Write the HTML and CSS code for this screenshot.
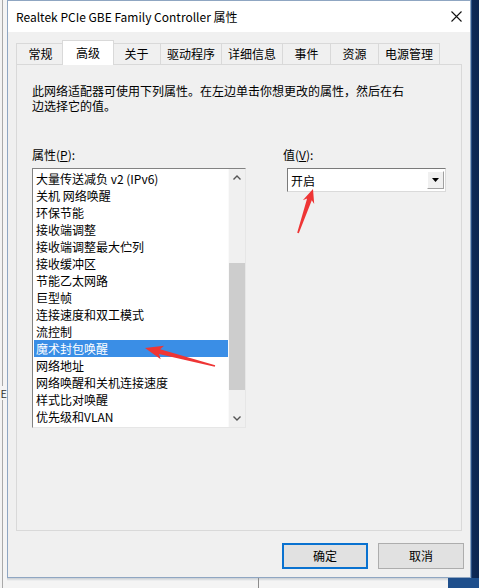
FILE: index.html
```html
<!DOCTYPE html>
<html lang="zh-CN">
<head>
<meta charset="utf-8">
<title>Realtek PCIe GBE Family Controller 属性</title>
<link rel="stylesheet" href="styles.css">
</head>
<body>
<div class="desktop">
  <div class="bg-left"><div class="frag">E</div></div>

  <div class="dialog">
    <div class="titlebar">
      <span class="title">Realtek PCIe GBE Family Controller 属性</span>
      <svg class="close" width="11" height="11" viewBox="0 0 11 11"><path d="M0.5 0.5 L10.5 10.5 M10.5 0.5 L0.5 10.5" stroke="#111" stroke-width="1.1" fill="none"/></svg>
    </div>
    <div class="body">
      <div class="tabs">
        <div class="tab">常规</div>
        <div class="tab active">高级</div>
        <div class="tab">关于</div>
        <div class="tab">驱动程序</div>
        <div class="tab">详细信息</div>
        <div class="tab">事件</div>
        <div class="tab">资源</div>
        <div class="tab">电源管理</div>
      </div>
      <div class="panel">
        <p class="desc">此网络适配器可使用下列属性。在左边单击你想更改的属性，然后在右边选择它的值。</p>
        <div class="cols">
          <div class="col-left">
            <div class="label">属性(<u>P</u>):</div>
            <div class="listbox">
              <ul class="items">
                <li class="item">大量传送减负 v2 (IPv6)</li>
                <li class="item">关机 网络唤醒</li>
                <li class="item">环保节能</li>
                <li class="item">接收端调整</li>
                <li class="item">接收端调整最大伫列</li>
                <li class="item">接收缓冲区</li>
                <li class="item">节能乙太网路</li>
                <li class="item">巨型帧</li>
                <li class="item">连接速度和双工模式</li>
                <li class="item">流控制</li>
                <li class="item selected">魔术封包唤醒</li>
                <li class="item">网络地址</li>
                <li class="item">网络唤醒和关机连接速度</li>
                <li class="item">样式比对唤醒</li>
                <li class="item">优先级和VLAN</li>
              </ul>
              <div class="scrollbar">
                <div class="sb-btn"><svg width="8" height="5" viewBox="0 0 8 5"><path d="M0.5 4.5 L4 1 L7.5 4.5" stroke="#555" stroke-width="1.4" fill="none"/></svg></div>
                <div class="sb-track"><div class="sb-thumb"></div></div>
                <div class="sb-btn"><svg width="8" height="5" viewBox="0 0 8 5"><path d="M0.5 0.5 L4 4 L7.5 0.5" stroke="#555" stroke-width="1.4" fill="none"/></svg></div>
              </div>
            </div>
          </div>
          <div class="col-right">
            <div class="label">值(<u>V</u>):</div>
            <div class="select">
              <span class="select-text">开启</span>
              <span class="select-btn"><svg width="7" height="4" viewBox="0 0 7 4"><path d="M0 0 L7 0 L3.5 4 Z" fill="#000"/></svg></span>
            </div>
          </div>
        </div>
      </div>
      <div class="actions">
        <button class="btn default">确定</button>
        <button class="btn">取消</button>
      </div>
    </div>
  </div>

  <div class="desk-right"></div>
  <div class="bottom"><div class="b-light"><span class="b-edge"></span></div><div class="b-dark"></div></div>

  <svg class="annot" width="479" height="588" viewBox="0 0 479 588">
    <polygon fill="#ee3535" points="313,189 314.2,204.1 311.8,200.2 298.8,233.3 297.2,232.7 307.1,198.6 302.8,200.3"/>
    <polygon fill="#ee3535" points="145,348 164.1,345.7 160.1,349.3 215.2,365.2 214.8,366.8 158.9,354.1 160.7,359.3"/>
  </svg>
</div>
</body>
</html>
```

FILE: styles.css
```css
html, body {
  margin: 0;
  padding: 0;
}

.desktop {
  width: 479px;
  height: 588px;
  display: grid;
  grid-template-columns: 7px 464px 8px;
  grid-template-rows: 578px 10px;
  overflow: hidden;
  position: relative;
  background: #f2f2f2;
  font-family: "Noto Sans CJK SC", "Noto Sans", sans-serif;
  font-size: 12px;
  color: #000;
}

.bg-left {
  grid-column: 1;
  grid-row: 1 / 3;
  background: linear-gradient(to right, #f3f3f3 2px, #a9a9a9 2px, #a9a9a9 3px, #f4f4f4 3px);
  display: flex;
  flex-direction: column;
}

.frag {
  margin-top: 386px;
  height: 14px;
  line-height: 14px;
  font-size: 11px;
  text-align: right;
  background: #f4f4f4;
  color: #333;
}

.dialog {
  grid-column: 2;
  grid-row: 1;
  box-sizing: border-box;
  border: 1px solid #8fa6c2;
  background: #f0f0f0;
  display: flex;
  flex-direction: column;
}

.titlebar {
  height: 31px;
  flex: none;
  background: #fff;
  display: flex;
  align-items: center;
  justify-content: space-between;
  padding: 0 8px 0 8px;
}

.title {
  line-height: 14px;
  color: #000;
}

.close {
  display: block;
  margin-top: -1px;
}

.body {
  padding: 8px 6px 8px 8px;
  display: flex;
  flex-direction: column;
}

.tabs {
  display: flex;
  align-items: flex-end;
  height: 24px;
}

.tab {
  height: 21px;
  min-width: 48px;
  padding: 0 6px;
  box-sizing: border-box;
  border-top: 1px solid #d9d9d9;
  border-left: 1px solid #d9d9d9;
  background: #f0f0f0;
  display: flex;
  align-items: center;
  justify-content: center;
  line-height: 14px;
  white-space: nowrap;
}

.tab:last-child {
  border-right: 1px solid #d9d9d9;
}

.tab.active {
  height: 25px;
  min-width: 52px;
  margin: 0 -2px -1px -2px;
  border-right: 1px solid #d9d9d9;
  background: #ffffff;
  position: relative;
  z-index: 1;
}

.panel {
  width: 446px;
  height: 467px;
  box-sizing: border-box;
  border: 1px solid #d9d9d9;
  background: #f0f0f0;
  padding: 18px 15px 0 15px;
}

.desc {
  margin: 0;
  width: 380px;
  line-height: 15px;
}

.cols {
  display: flex;
  gap: 37px;
  margin-top: 34px;
}

.col-left {
  width: 214px;
}

.col-right {
  width: 163px;
}

.label {
  height: 15px;
  line-height: 15px;
}

.listbox {
  margin-top: 6px;
  height: 260px;
  box-sizing: border-box;
  border: 1px solid;
  border-color: #828282 #e6e6e6 #e6e6e6 #828282;
  background: #fff;
  display: flex;
}

.items {
  flex: 1;
  list-style: none;
  margin: 0;
  padding: 1px 0 0 1px;
  min-width: 0;
}

.item {
  height: 17px;
  line-height: 17px;
  padding-left: 2px;
  white-space: nowrap;
  overflow: hidden;
}

.item.selected {
  background: #3a8ee6;
  color: #fff;
}

.scrollbar {
  width: 17px;
  flex: none;
  background: #f0f0f0;
  display: flex;
  flex-direction: column;
  box-sizing: border-box;
  border-left: 1px solid #fafafa;
}

.sb-btn {
  height: 17px;
  flex: none;
  display: flex;
  align-items: center;
  justify-content: center;
}

.sb-btn svg {
  display: block;
}

.sb-track {
  flex: 1;
  display: flex;
  flex-direction: column;
}

.sb-thumb {
  margin-top: 77px;
  height: 127px;
  background: #cdcdcd;
}

.select {
  margin-left: 4px;
  margin-top: 6px;
  width: 159px;
  height: 24px;
  box-sizing: border-box;
  border: 1px solid;
  border-color: #7a7a7a #dadada #dadada #7a7a7a;
  background: #fff;
  display: flex;
  align-items: center;
  padding: 1px 1px 1px 3px;
}

.select-text {
  flex: 1;
  line-height: 15px;
}

.select-btn {
  width: 17px;
  height: 18px;
  box-sizing: border-box;
  background: #f0f0f0;
  border: 1px solid;
  border-color: #ffffff #a0a0a0 #a0a0a0 #ffffff;
  display: flex;
  align-items: center;
  justify-content: center;
}

.select-btn svg {
  display: block;
}

.actions {
  display: flex;
  justify-content: flex-end;
  gap: 10px;
  margin-top: 12px;
}

.btn {
  width: 86px;
  height: 26px;
  box-sizing: border-box;
  border: 1px solid #adadad;
  background: #e1e1e1;
  font-family: inherit;
  font-size: 12px;
  color: #000;
  padding: 0;
  line-height: 14px;
}

.btn.default {
  border: 2px solid #0a72d0;
}

.desk-right {
  grid-column: 3;
  grid-row: 1;
  background: linear-gradient(to right, #2a4f84 0, #2a4f84 1px, #0f2a57 1px, #0c2550 100%);
}

.bottom {
  grid-column: 2 / 4;
  grid-row: 2;
  display: flex;
}

.b-light {
  width: 441px;
  flex: none;
  background: linear-gradient(to bottom, #c9ced4 0, #e4e6e8 2px, #f4f4f4 3px);
  display: flex;
}

.b-edge {
  margin-left: 251px;
  width: 1px;
  background: #8c8c8c;
}

.b-dark {
  flex: 1;
  background: #1f4f8c;
}

.annot {
  position: absolute;
  left: 0;
  top: 0;
  pointer-events: none;
}
```
